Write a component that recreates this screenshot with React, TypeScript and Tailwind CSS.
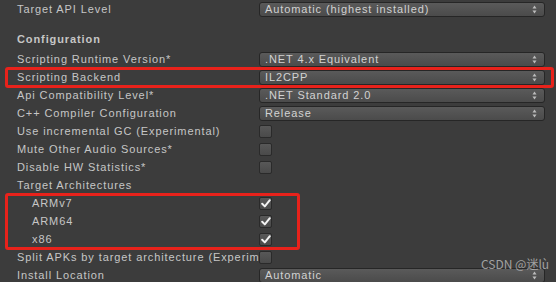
import React from 'react';

type Row =
  | { kind: 'select'; label: string; value: string }
  | { kind: 'check'; label: string; checked?: boolean; indent?: boolean };

const rows: Row[] = [
  { kind: 'select', label: 'Scripting Runtime Version*', value: '.NET 4.x Equivalent' },
  { kind: 'select', label: 'Scripting Backend', value: 'IL2CPP' },
  { kind: 'select', label: 'Api Compatibility Level*', value: '.NET Standard 2.0' },
  { kind: 'select', label: 'C++ Compiler Configuration', value: 'Release' },
  { kind: 'check', label: 'Use incremental GC (Experimental)' },
  { kind: 'check', label: 'Mute Other Audio Sources*' },
  { kind: 'check', label: 'Disable HW Statistics*' },
];

const arch = ['ARMv7', 'ARM64', 'x86'];

function Arrows() {
  return (
    <svg width="5" height="9" viewBox="0 0 5 9" className="shrink-0">
      <path d="M2.5 0.5 L4.5 3.5 L0.5 3.5 Z" fill="#bdbdbd" />
      <path d="M2.5 8.5 L4.5 5.5 L0.5 5.5 Z" fill="#bdbdbd" />
    </svg>
  );
}

function Select({ value }: { value: string }) {
  return (
    <div className="flex h-[15px] w-[286px] items-center justify-between rounded-[3px] border border-[#262626] bg-gradient-to-b from-[#5a5a5a] to-[#4b4b4b] pl-[5px] pr-[7px] text-[#d2d2d2]">
      <span className="leading-none">{value}</span>
      <Arrows />
    </div>
  );
}

function Check({ checked }: { checked?: boolean }) {
  return (
    <div className="flex h-[13px] w-[13px] shrink-0 items-center justify-center rounded-[2px] border border-[#2a2a2a] bg-gradient-to-b from-[#585858] to-[#4a4a4a]">
      {checked && (
        <svg width="10" height="9" viewBox="0 0 10 9">
          <path d="M1.2 4.8 L3.8 7.4 L8.8 1.2" stroke="#f2f2f2" strokeWidth="2" fill="none" strokeLinecap="round" strokeLinejoin="round" />
        </svg>
      )}
    </div>
  );
}

function Line({ label, indent, children }: { label: string; indent?: boolean; children?: React.ReactNode }) {
  return (
    <div className="flex h-[18px] items-center">
      <div className={`w-[259px] shrink-0 overflow-hidden whitespace-nowrap ${indent ? 'pl-[32px]' : 'pl-[17px]'}`}>{label}</div>
      {children}
    </div>
  );
}

export default function App() {
  return (
    <div
      className="relative h-[282px] w-[556px] overflow-hidden bg-[#3c3c3c] text-[11px] tracking-[0.9px] text-[#c6c6c6]"
      style={{ fontFamily: '"Liberation Sans", Arial, sans-serif' }}
    >
      <Line label="Target API Level">
        <Select value="Automatic (highest installed)" />
      </Line>
      <div className="flex h-[32px] items-end pb-[2px] pl-[17px]">
        <div className="flex h-[18px] items-center font-bold">Configuration</div>
      </div>
      {rows.map((r) => (
        <Line key={r.label} label={r.label}>
          {r.kind === 'select' ? <Select value={r.value} /> : <Check checked={r.checked} />}
        </Line>
      ))}
      <Line label="Target Architectures" />
      {arch.map((a) => (
        <Line key={a} label={a} indent>
          <Check checked />
        </Line>
      ))}
      <Line label="Split APKs by target architecture (Experimental)">
        <Check />
      </Line>
      <Line label="Install Location">
        <Select value="Automatic" />
      </Line>

      {/* red annotation boxes */}
      <div className="absolute left-[5px] top-[67px] h-[21px] w-[549px] rounded-[3px] border-[3px] border-[#e8221b]" />
      <div className="absolute left-[5px] top-[193px] h-[57px] w-[295px] rounded-[3px] border-[3px] border-[#e8221b]" />

      {/* watermark */}
      <div
        className="absolute left-[481px] top-[258px] text-[12px] leading-none tracking-normal text-[#d0d0d0]/70"
        style={{ fontFamily: '"Noto Sans CJK SC", "Liberation Sans", sans-serif' }}
      >
        CSDN @迷lù
      </div>
    </div>
  );
}
